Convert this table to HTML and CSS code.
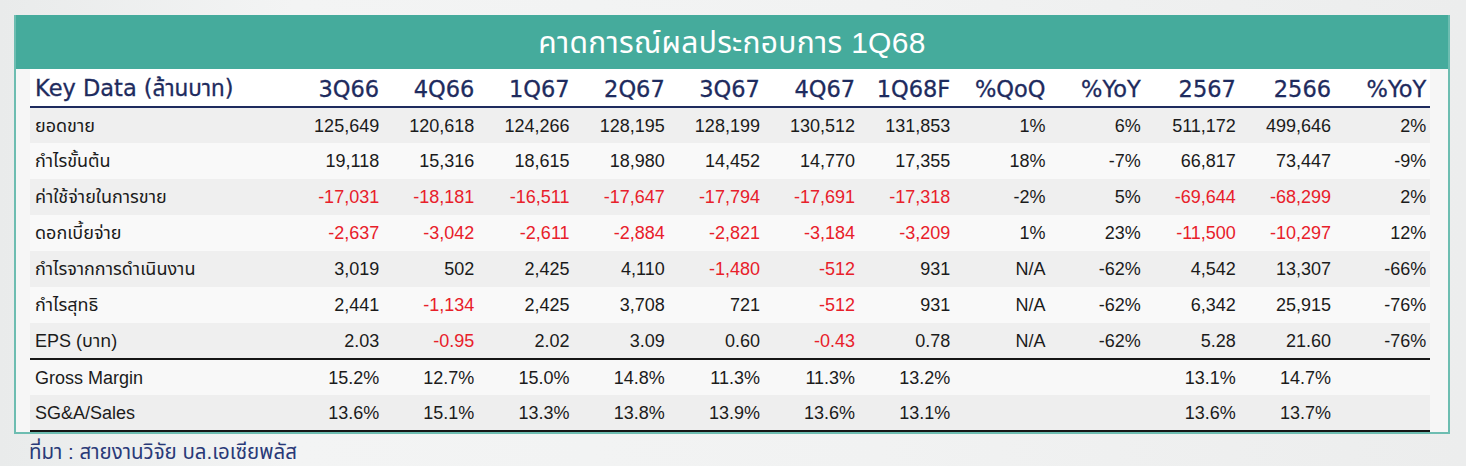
FILE: index.html
```html
<!DOCTYPE html>
<html lang="th">
<head>
<meta charset="utf-8">
<title>คาดการณ์ผลประกอบการ 1Q68</title>
<link rel="stylesheet" href="styles.css">
</head>
<body>
<div class="page">
  <section class="panel">
    <h1 class="title">คาดการณ์ผลประกอบการ 1Q68</h1>
    <div class="body">
      <table class="data">
        <colgroup>
          <col class="c-label">
          <col span="12" class="c-num">
        </colgroup>
        <thead>
          <tr>
            <th class="lbl">Key Data (ล้านบาท)</th>
            <th>3Q66</th><th>4Q66</th><th>1Q67</th><th>2Q67</th><th>3Q67</th><th>4Q67</th><th>1Q68F</th><th>%QoQ</th><th>%YoY</th><th>2567</th><th>2566</th><th>%YoY</th>
          </tr>
        </thead>
        <tbody class="main">
          <tr>
            <td class="lbl">ยอดขาย</td>
            <td>125,649</td><td>120,618</td><td>124,266</td><td>128,195</td><td>128,199</td><td>130,512</td><td>131,853</td><td>1%</td><td>6%</td><td>511,172</td><td>499,646</td><td>2%</td>
          </tr>
          <tr>
            <td class="lbl">กำไรขั้นต้น</td>
            <td>19,118</td><td>15,316</td><td>18,615</td><td>18,980</td><td>14,452</td><td>14,770</td><td>17,355</td><td>18%</td><td>-7%</td><td>66,817</td><td>73,447</td><td>-9%</td>
          </tr>
          <tr>
            <td class="lbl">ค่าใช้จ่ายในการขาย</td>
            <td class="neg">-17,031</td><td class="neg">-18,181</td><td class="neg">-16,511</td><td class="neg">-17,647</td><td class="neg">-17,794</td><td class="neg">-17,691</td><td class="neg">-17,318</td><td>-2%</td><td>5%</td><td class="neg">-69,644</td><td class="neg">-68,299</td><td>2%</td>
          </tr>
          <tr>
            <td class="lbl">ดอกเบี้ยจ่าย</td>
            <td class="neg">-2,637</td><td class="neg">-3,042</td><td class="neg">-2,611</td><td class="neg">-2,884</td><td class="neg">-2,821</td><td class="neg">-3,184</td><td class="neg">-3,209</td><td>1%</td><td>23%</td><td class="neg">-11,500</td><td class="neg">-10,297</td><td>12%</td>
          </tr>
          <tr>
            <td class="lbl">กำไรจากการดำเนินงาน</td>
            <td>3,019</td><td>502</td><td>2,425</td><td>4,110</td><td class="neg">-1,480</td><td class="neg">-512</td><td>931</td><td>N/A</td><td>-62%</td><td>4,542</td><td>13,307</td><td>-66%</td>
          </tr>
          <tr>
            <td class="lbl">กำไรสุทธิ</td>
            <td>2,441</td><td class="neg">-1,134</td><td>2,425</td><td>3,708</td><td>721</td><td class="neg">-512</td><td>931</td><td>N/A</td><td>-62%</td><td>6,342</td><td>25,915</td><td>-76%</td>
          </tr>
          <tr>
            <td class="lbl">EPS (บาท)</td>
            <td>2.03</td><td class="neg">-0.95</td><td>2.02</td><td>3.09</td><td>0.60</td><td class="neg">-0.43</td><td>0.78</td><td>N/A</td><td>-62%</td><td>5.28</td><td>21.60</td><td>-76%</td>
          </tr>
        </tbody>
        <tbody class="ratios">
          <tr>
            <td class="lbl">Gross Margin</td>
            <td>15.2%</td><td>12.7%</td><td>15.0%</td><td>14.8%</td><td>11.3%</td><td>11.3%</td><td>13.2%</td><td></td><td></td><td>13.1%</td><td>14.7%</td><td></td>
          </tr>
          <tr>
            <td class="lbl">SG&amp;A/Sales</td>
            <td>13.6%</td><td>15.1%</td><td>13.3%</td><td>13.8%</td><td>13.9%</td><td>13.6%</td><td>13.1%</td><td></td><td></td><td>13.6%</td><td>13.7%</td><td></td>
          </tr>
        </tbody>
      </table>
    </div>
  </section>
  <p class="source">ที่มา : สายงานวิจัย บล.เอเซียพลัส</p>
</div>
</body>
</html>
```

FILE: styles.css
```css
* { box-sizing: border-box; }
html, body { margin: 0; padding: 0; }
body {
  width: 1466px;
  height: 466px;
  overflow: hidden;
  background: linear-gradient(90deg, #e9ebeb 0%, #f3f4f4 20%, #f1f2f2 60%, #eceded 100%);
  font-family: "Liberation Sans", "Noto Sans Thai", "Noto Sans", sans-serif;
  color: #1b1b1b;
}
.page {
  padding: 15px 16px 0 14px;
}
.panel {
  border: 2px solid #6dbdb1;
  border-top: none;
  background: #f6f6f6;
}
.title {
  margin: 0;
  height: 54px;
  background: #45ab9c;
  color: #ffffff;
  font-weight: normal;
  font-size: 30px;
  line-height: 56px;
  text-align: center;
  letter-spacing: 0.3px;
}
.body {
  padding: 0 14px 0 14px;
}
.data {
  border-collapse: collapse;
  table-layout: fixed;
  width: 1400px;
}
.c-label { width: 258px; }
.c-num { width: 95.2px; }
.data th {
  font-family: "DejaVu Sans", "Noto Sans Thai", sans-serif;
  font-weight: normal;
  color: #1e2b5e;
  font-size: 22.5px;
  height: 37px;
  padding: 3px 4px 0 0;
  text-align: right;
  background: #ffffff;
  border-bottom: 2px solid #1e2b5e;
  white-space: nowrap;
  -webkit-text-stroke: 0.3px #1e2b5e;
}
.data th.lbl {
  text-align: left;
  padding-left: 5px;
}
.data td {
  font-size: 18px;
  height: 36px;
  padding: 1px 4px 0 0;
  text-align: right;
  white-space: nowrap;
}
.data td.lbl {
  text-align: left;
  padding-left: 5px;
}
.data td.neg { color: #e8202a; }
.main tr:nth-child(odd) td { background: #efefef; }
.main tr:nth-child(even) td { background: #f9f9f9; }
.main tr:last-child td { border-bottom: 2px solid #151515; }
.ratios tr td { height: 36px; }
.ratios tr:nth-child(odd) td { background: #f8f8f8; }
.ratios tr:nth-child(even) td { background: #eeeeee; }
.ratios tr:last-child td { border-bottom: 2px solid #151515; }
.source {
  margin: 3px 0 0 15px;
  font-size: 20.5px;
  color: #2a3a78;
}
```
